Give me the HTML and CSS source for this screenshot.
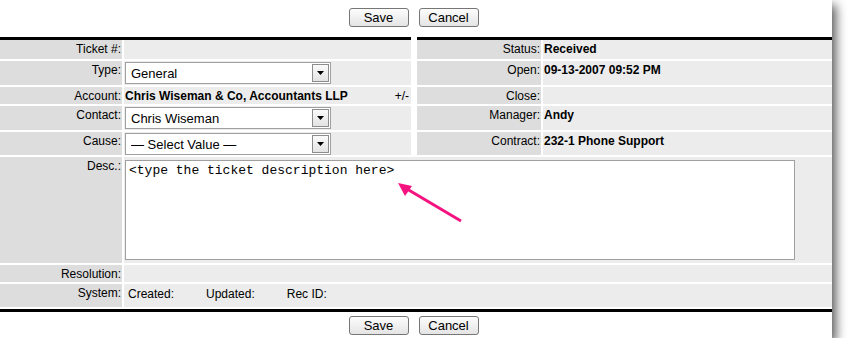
FILE: index.html
```html
<!DOCTYPE html>
<html lang="en">
<head>
    <meta charset="UTF-8">
    <title>Ticket</title>
    <link rel="stylesheet" href="styles.css">
</head>
<body>
    <div class="panel">
        <div class="actions">
            <button class="btn">Save</button>
            <button class="btn">Cancel</button>
        </div>
        <div class="rule-split"><span></span><span></span></div>

        <div class="ticket">
            <div class="lbl">Ticket #:</div>
            <div class="val"></div>
            <div class="lbl right">Status:</div>
            <div class="val">Received</div>

            <div class="lbl">Type:</div>
            <div class="val">
                <div class="select">
                    <select><option>General</option></select>
                    <span class="drop"><svg width="7" height="4" viewBox="0 0 7 4"><path d="M0 0h7L3.5 4z" fill="#000"/></svg></span>
                </div>
            </div>
            <div class="lbl right">Open:</div>
            <div class="val">09-13-2007 09:52 PM</div>

            <div class="lbl">Account:</div>
            <div class="val split">Chris Wiseman &amp; Co, Accountants LLP <span class="toggle">+/-</span></div>
            <div class="lbl right">Close:</div>
            <div class="val"></div>

            <div class="lbl">Contact:</div>
            <div class="val">
                <div class="select">
                    <select><option>Chris Wiseman</option></select>
                    <span class="drop"><svg width="7" height="4" viewBox="0 0 7 4"><path d="M0 0h7L3.5 4z" fill="#000"/></svg></span>
                </div>
            </div>
            <div class="lbl right">Manager:</div>
            <div class="val">Andy</div>

            <div class="lbl">Cause:</div>
            <div class="val">
                <div class="select">
                    <select><option>— Select Value —</option></select>
                    <span class="drop"><svg width="7" height="4" viewBox="0 0 7 4"><path d="M0 0h7L3.5 4z" fill="#000"/></svg></span>
                </div>
            </div>
            <div class="lbl right">Contract:</div>
            <div class="val">232-1 Phone Support</div>

            <div class="lbl">Desc.:</div>
            <div class="val wide"><textarea>&lt;type the ticket description here&gt;</textarea></div>

            <div class="lbl">Resolution:</div>
            <div class="val wide"></div>

            <div class="lbl">System:</div>
            <div class="val wide system">
                <span>Created:</span>
                <span>Updated:</span>
                <span>Rec ID:</span>
            </div>
        </div>

        <div class="rule"></div>
        <div class="actions bottom">
            <button class="btn">Save</button>
            <button class="btn">Cancel</button>
        </div>

        <!-- callout arrow pointing at the description box -->
        <svg class="arrow" width="70" height="45" viewBox="0 0 70 45">
            <line x1="12" y1="9" x2="66" y2="41" stroke="#f5137f" stroke-width="3"/>
            <path d="M3 3L17 6L10 16z" fill="#f5137f"/>
        </svg>
    </div>
</body>
</html>
```

FILE: styles.css
```css
body {
    margin: 0;
    background-color: #fff;
    font-family: 'Liberation Sans', Arial, sans-serif;
    font-size: 12px;
    color: #000;
}

.panel {
    position: relative;
    width: 832px;
    background-color: #fff;
    box-shadow: 4px 5px 10px rgba(0, 0, 0, 0.65);
}

.actions {
    display: flex;
    justify-content: center;
    align-items: flex-start;
    gap: 10px;
    height: 37px;
    padding: 8px 5px 0 0;
    box-sizing: border-box;
}

.actions.bottom {
    height: 26px;
    padding-top: 4px;
}

.btn {
    min-width: 60px;
    height: 19px;
    padding: 0 8px;
    font-family: 'Liberation Sans', Arial, sans-serif;
    font-size: 13px;
    line-height: 17px;
    color: #000;
    border: 1px solid #767676;
    border-radius: 3px;
    background: linear-gradient(#fdfdfd, #e4e4e4);
}

.rule-split {
    display: flex;
    gap: 6px;
}

.rule-split span {
    height: 3px;
    background-color: #000;
}

.rule-split span:first-child {
    width: 411px;
}

.rule-split span:last-child {
    flex: 1;
}

.rule {
    height: 3px;
    background-color: #000;
}

.ticket {
    display: grid;
    grid-template-columns: 122px 287px 128px 1fr;
    grid-template-rows: 19px 24px 17px 24px 23px 106px 17px 23px;
    gap: 2px;
    padding-bottom: 2px;
}

.lbl {
    background-color: #dddddd;
    text-align: right;
    padding: 2px 1px 0 0;
    line-height: 14px;
}

.lbl.right {
    margin-left: 4px;
}

.val {
    background-color: #ececec;
    font-weight: bold;
    padding: 2px 1px 0 1px;
    line-height: 14px;
}

.val.wide {
    grid-column: 2 / 5;
}

.val.split {
    display: flex;
    justify-content: space-between;
    padding-right: 2px;
}

.toggle {
    font-weight: normal;
}

.val:has(.select) {
    padding-top: 1px;
}

.select {
    position: relative;
    width: 206px;
    height: 22px;
}

.select select {
    appearance: none;
    width: 100%;
    height: 100%;
    margin: 0;
    padding: 0 22px 0 5px;
    border: 1px solid #a0a0a0;
    border-radius: 0;
    background-color: #fff;
    font-family: 'Liberation Sans', Arial, sans-serif;
    font-size: 13px;
    color: #000;
}

.select .drop {
    position: absolute;
    top: 2px;
    right: 2px;
    width: 17px;
    height: 18px;
    box-sizing: border-box;
    border: 1px solid #8c8c8c;
    background: linear-gradient(#fafafa, #e3e3e3);
    display: flex;
    align-items: center;
    justify-content: center;
}

.val.wide:has(textarea) {
    padding-top: 3px;
}

textarea {
    display: block;
    width: 670px;
    height: 100px;
    margin: 0;
    padding: 2px 3px;
    box-sizing: border-box;
    border: 1px solid #a0a0a0;
    resize: none;
    font-family: 'Liberation Mono', 'Courier New', monospace;
    font-size: 13px;
    line-height: 15px;
    color: #000;
}

.system {
    display: flex;
    gap: 32px;
    padding: 3px 0 0 4px;
    font-weight: normal;
}

.arrow {
    position: absolute;
    left: 395px;
    top: 180px;
}
```
